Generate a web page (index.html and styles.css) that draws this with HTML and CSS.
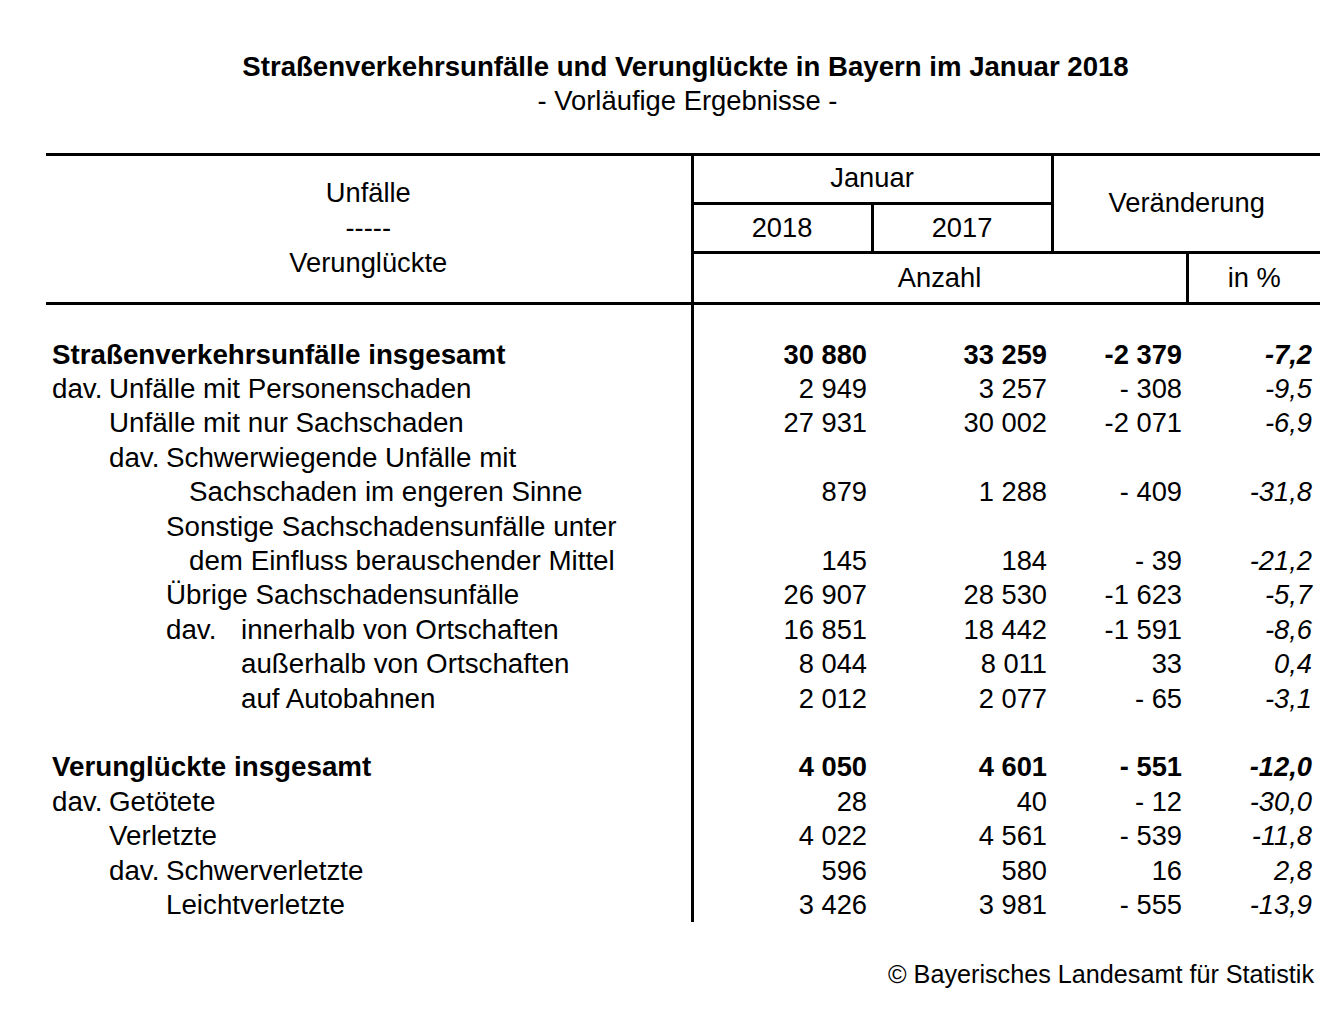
FILE: index.html
```html
<!DOCTYPE html>
<html lang="de">
<head>
<meta charset="utf-8">
<title>Straßenverkehrsunfälle und Verunglückte in Bayern im Januar 2018</title>
<link rel="stylesheet" href="styles.css">
</head>
<body>
<div class="page">
  <header class="head">
    <h1 class="title">Straßenverkehrsunfälle und Verunglückte in Bayern im Januar 2018</h1>
    <p class="subtitle">- Vorläufige Ergebnisse -</p>
  </header>

  <table class="stats">
    <colgroup>
      <col class="c-label">
      <col class="c-n1">
      <col class="c-n2">
      <col class="c-n3">
      <col class="c-n4">
    </colgroup>
    <thead>
      <tr class="h1">
        <th class="hl" rowspan="3">
          <span class="hl-line">Unfälle</span>
          <span class="hl-line">-----</span>
          <span class="hl-line">Verunglückte</span>
        </th>
        <th class="hb hr" colspan="2">Januar</th>
        <th class="hb" colspan="2" rowspan="2">Veränderung</th>
      </tr>
      <tr class="h2">
        <th class="hb hr">2018</th>
        <th class="hb hr">2017</th>
      </tr>
      <tr class="h3">
        <th class="hb hr" colspan="3">Anzahl</th>
        <th class="hb">in %</th>
      </tr>
    </thead>
    <tbody>
      <tr class="blank"><td class="lab"></td><td></td><td></td><td></td><td></td></tr>

      <tr class="bold">
        <td class="lab">Straßenverkehrsunfälle insgesamt</td>
        <td class="num">30 880</td><td class="num">33 259</td><td class="num">-2 379</td><td class="num pct">-7,2</td>
      </tr>
      <tr>
        <td class="lab"><span class="dav">dav.</span>Unfälle mit Personenschaden</td>
        <td class="num">2 949</td><td class="num">3 257</td><td class="num">- 308</td><td class="num pct">-9,5</td>
      </tr>
      <tr>
        <td class="lab i1">Unfälle mit nur Sachschaden</td>
        <td class="num">27 931</td><td class="num">30 002</td><td class="num">-2 071</td><td class="num pct">-6,9</td>
      </tr>
      <tr>
        <td class="lab i1"><span class="dav">dav.</span>Schwerwiegende Unfälle mit</td>
        <td></td><td></td><td></td><td></td>
      </tr>
      <tr>
        <td class="lab i3">Sachschaden im engeren Sinne</td>
        <td class="num">879</td><td class="num">1 288</td><td class="num">- 409</td><td class="num pct">-31,8</td>
      </tr>
      <tr>
        <td class="lab i2">Sonstige Sachschadensunfälle unter</td>
        <td></td><td></td><td></td><td></td>
      </tr>
      <tr>
        <td class="lab i3">dem Einfluss berauschender Mittel</td>
        <td class="num">145</td><td class="num">184</td><td class="num">- 39</td><td class="num pct">-21,2</td>
      </tr>
      <tr>
        <td class="lab i2">Übrige Sachschadensunfälle</td>
        <td class="num">26 907</td><td class="num">28 530</td><td class="num">-1 623</td><td class="num pct">-5,7</td>
      </tr>
      <tr>
        <td class="lab i2"><span class="dav dav-wide">dav.</span>innerhalb von Ortschaften</td>
        <td class="num">16 851</td><td class="num">18 442</td><td class="num">-1 591</td><td class="num pct">-8,6</td>
      </tr>
      <tr>
        <td class="lab i4">außerhalb von Ortschaften</td>
        <td class="num">8 044</td><td class="num">8 011</td><td class="num">33</td><td class="num pct">0,4</td>
      </tr>
      <tr>
        <td class="lab i4">auf Autobahnen</td>
        <td class="num">2 012</td><td class="num">2 077</td><td class="num">- 65</td><td class="num pct">-3,1</td>
      </tr>

      <tr class="blank"><td class="lab"></td><td></td><td></td><td></td><td></td></tr>

      <tr class="bold">
        <td class="lab">Verunglückte insgesamt</td>
        <td class="num">4 050</td><td class="num">4 601</td><td class="num">- 551</td><td class="num pct">-12,0</td>
      </tr>
      <tr>
        <td class="lab"><span class="dav">dav.</span>Getötete</td>
        <td class="num">28</td><td class="num">40</td><td class="num">- 12</td><td class="num pct">-30,0</td>
      </tr>
      <tr>
        <td class="lab i1">Verletzte</td>
        <td class="num">4 022</td><td class="num">4 561</td><td class="num">- 539</td><td class="num pct">-11,8</td>
      </tr>
      <tr>
        <td class="lab i1"><span class="dav">dav.</span>Schwerverletzte</td>
        <td class="num">596</td><td class="num">580</td><td class="num">16</td><td class="num pct">2,8</td>
      </tr>
      <tr>
        <td class="lab i2">Leichtverletzte</td>
        <td class="num">3 426</td><td class="num">3 981</td><td class="num">- 555</td><td class="num pct">-13,9</td>
      </tr>
    </tbody>
  </table>

  <footer class="source">© Bayerisches Landesamt für Statistik</footer>
</div>
</body>
</html>
```

FILE: styles.css
```css
html, body {
  margin: 0;
  padding: 0;
  background: #ffffff;
}

body {
  font-family: "Liberation Sans", Arial, sans-serif;
  font-size: 27.3px;
  color: #000000;
}

.page {
  width: 1274px;
  margin-left: 46px;
}

.head {
  padding-top: 50px;
  padding-left: 5px;
  margin-bottom: 35px;
  text-align: center;
}

.title {
  margin: 0;
  font-size: 27.6px;
  font-weight: bold;
  line-height: 34px;
}

.subtitle {
  margin: 0;
  font-size: 27.4px;
  font-weight: normal;
  line-height: 34px;
  padding-left: 4px;
}

.stats {
  width: 1274px;
  table-layout: fixed;
  border-collapse: collapse;
  border-top: 3px solid #000;
}

.c-label { width: 646px; }
.c-n1 { width: 180px; }
.c-n2 { width: 180px; }
.c-n3 { width: 135px; }
.c-n4 { width: 133px; }

.stats th {
  font-weight: normal;
  padding: 0;
  text-align: center;
  vertical-align: middle;
  line-height: 34px;
}

.stats tr.h1 { height: 49px; }
.stats tr.h2 { height: 49px; }
.stats tr.h3 { height: 51px; }

.hl {
  border-right: 3px solid #000;
  border-bottom: 3px solid #000;
  padding-bottom: 4px !important;
}

.hl-line {
  display: block;
  line-height: 35px;
}

.hb { border-bottom: 3px solid #000; }
.hr { border-right: 3px solid #000; }

.h1 .hb.hr { padding-bottom: 3px !important; }
.h1 .hb:not(.hr) { padding-bottom: 2px !important; }

.stats td {
  padding: 0;
  height: 34.4px;
  line-height: 34.4px;
  white-space: nowrap;
  vertical-align: middle;
}

.stats tr.blank:first-child td { height: 32.5px; }

.stats td.lab {
  border-right: 3px solid #000;
  padding-left: 6px;
  font-size: 27.75px;
}

.stats td.i1 { padding-left: 63px; }
.stats td.i2 { padding-left: 120px; }
.stats td.i3 { padding-left: 143px; }
.stats td.i4 { padding-left: 195px; }

.dav {
  display: inline-block;
  width: 57px;
}

.dav-wide { width: 75px; }

.num {
  text-align: right;
  padding-right: 5px !important;
}

.num.pct {
  font-style: italic;
  padding-right: 8px !important;
}

tr.bold td { font-weight: bold; }

.source {
  margin-top: 35px;
  padding-right: 6px;
  font-size: 25.2px;
  text-align: right;
  line-height: 34px;
}
```
